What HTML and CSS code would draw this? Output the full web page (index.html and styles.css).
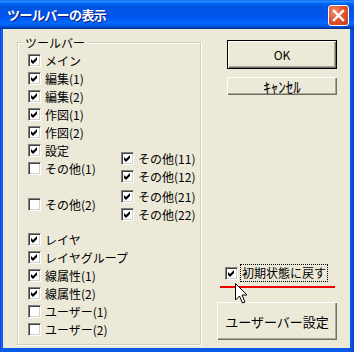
FILE: index.html
```html
<!DOCTYPE html>
<html lang="ja">
<head>
<meta charset="utf-8">
<title>ツールバーの表示</title>
<link rel="stylesheet" href="styles.css">
</head>
<body>
<div class="window">
  <div class="titlebar">
    <span class="title">ツールバーの表示</span>
    <span class="close"><svg width="13" height="13" viewBox="0 0 13 13"><path d="M2 2 L11 11 M11 2 L2 11" stroke="#fff" stroke-width="2.4" stroke-linecap="square"/></svg></span>
  </div>
  <div class="client">
    <fieldset class="group">
      <legend>ツールバー</legend>
      <div class="row"><span class="cb on"><svg viewBox="0 0 11 11"><path d="M2 4 L4 6 L8 2 L8 5 L4 9 L2 7 Z"/></svg></span>メイン</div>
      <div class="row"><span class="cb on"><svg viewBox="0 0 11 11"><path d="M2 4 L4 6 L8 2 L8 5 L4 9 L2 7 Z"/></svg></span>編集(1)</div>
      <div class="row"><span class="cb on"><svg viewBox="0 0 11 11"><path d="M2 4 L4 6 L8 2 L8 5 L4 9 L2 7 Z"/></svg></span>編集(2)</div>
      <div class="row"><span class="cb on"><svg viewBox="0 0 11 11"><path d="M2 4 L4 6 L8 2 L8 5 L4 9 L2 7 Z"/></svg></span>作図(1)</div>
      <div class="row"><span class="cb on"><svg viewBox="0 0 11 11"><path d="M2 4 L4 6 L8 2 L8 5 L4 9 L2 7 Z"/></svg></span>作図(2)</div>
      <div class="split">
        <div class="col col-left">
          <div class="row"><span class="cb on"><svg viewBox="0 0 11 11"><path d="M2 4 L4 6 L8 2 L8 5 L4 9 L2 7 Z"/></svg></span>設定</div>
          <div class="row"><span class="cb"></span>その他(1)</div>
          <div class="row row-skip"><span class="cb"></span>その他(2)</div>
        </div>
        <div class="col col-right">
          <div class="row"><span class="cb on"><svg viewBox="0 0 11 11"><path d="M2 4 L4 6 L8 2 L8 5 L4 9 L2 7 Z"/></svg></span>その他(11)</div>
          <div class="row"><span class="cb on"><svg viewBox="0 0 11 11"><path d="M2 4 L4 6 L8 2 L8 5 L4 9 L2 7 Z"/></svg></span>その他(12)</div>
          <div class="row row-gap"><span class="cb on"><svg viewBox="0 0 11 11"><path d="M2 4 L4 6 L8 2 L8 5 L4 9 L2 7 Z"/></svg></span>その他(21)</div>
          <div class="row"><span class="cb on"><svg viewBox="0 0 11 11"><path d="M2 4 L4 6 L8 2 L8 5 L4 9 L2 7 Z"/></svg></span>その他(22)</div>
        </div>
      </div>
      <div class="row row-after"><span class="cb on"><svg viewBox="0 0 11 11"><path d="M2 4 L4 6 L8 2 L8 5 L4 9 L2 7 Z"/></svg></span>レイヤ</div>
      <div class="row"><span class="cb on"><svg viewBox="0 0 11 11"><path d="M2 4 L4 6 L8 2 L8 5 L4 9 L2 7 Z"/></svg></span>レイヤグループ</div>
      <div class="row"><span class="cb on"><svg viewBox="0 0 11 11"><path d="M2 4 L4 6 L8 2 L8 5 L4 9 L2 7 Z"/></svg></span>線属性(1)</div>
      <div class="row"><span class="cb on"><svg viewBox="0 0 11 11"><path d="M2 4 L4 6 L8 2 L8 5 L4 9 L2 7 Z"/></svg></span>線属性(2)</div>
      <div class="row"><span class="cb"></span>ユーザー(1)</div>
      <div class="row"><span class="cb"></span>ユーザー(2)</div>
    </fieldset>
    <div class="side">
      <button class="btn btn-ok">OK</button>
      <button class="btn btn-cancel">ｷｬﾝｾﾙ</button>
      <div class="row row-reset"><span class="cb on"><svg viewBox="0 0 11 11"><path d="M2 4 L4 6 L8 2 L8 5 L4 9 L2 7 Z"/></svg></span><span class="focus">初期状態に戻す</span></div>
      <div class="redline"></div>
      <button class="btn btn-user">ユーザーバー設定</button>
    </div>
    <svg class="cursor" width="13" height="21" viewBox="0 0 13 21"><path d="M0.5 0.5 L0.5 17 L4.5 13 L7.5 20 L10 19 L7 12 L12 12 Z" fill="#fff" stroke="#000" stroke-width="1"/></svg>
  </div>
</div>
</body>
</html>
```
FILE: styles.css
```css
body {
  margin: 0;
}
.window {
  width: 354px;
  height: 352px;
  display: flex;
  flex-direction: column;
  background: linear-gradient(to right, #0831d9 0, #1665f0 1px, #0a5ae8 3px, #0a5ae8 350px, #0840d0 354px);
  font-family: "Noto Sans CJK JP", sans-serif;
  font-size: 12px;
  color: #000;
}
.titlebar {
  height: 29px;
  flex: none;
  display: flex;
  align-items: center;
  padding: 0 5px 0 7px;
  background: linear-gradient(to bottom, #0058ee 0%, #3593ff 4%, #288eff 6%, #127dff 8%, #036ffc 10%, #0262ee 14%, #0057e5 20%, #0054e3 24%, #0055eb 56%, #005bf5 66%, #026afe 76%, #0062ef 86%, #0052d6 92%, #0040ab 96%, #003092 100%);
}
.title {
  flex: 1;
  color: #fff;
  font-weight: bold;
  font-size: 13px;
  letter-spacing: -0.6px;
  line-height: 16px;
  text-shadow: 1px 1px 0 #0a1883;
}
.close {
  width: 21px;
  height: 21px;
  box-sizing: border-box;
  border: 1px solid #fff;
  border-radius: 3px;
  display: flex;
  align-items: center;
  justify-content: center;
  background: radial-gradient(circle at 30% 30%, #f0916f 0, #e2542e 45%, #c8401a 100%);
  margin-top: 2px;
}
.client {
  flex: 1;
  display: flex;
  align-items: stretch;
  background: #ece9d8;
  margin: 0 4px 4px 3px;
  position: relative;
}
.group {
  box-sizing: border-box;
  width: 184px;
  margin: 7px 0 3px 14px;
  padding: 2px 0 0 10px;
  border: 1px solid #d0d0bf;
  box-shadow: inset 1px 1px 0 #fff, 1px 1px 0 #fff;
  min-width: 0;
}
.group legend {
  padding: 0 2px;
  margin-left: -5px;
  line-height: 13px;
  background: #ece9d8;
}
.row {
  display: flex;
  align-items: center;
  gap: 4px;
  height: 18px;
  line-height: 13px;
  white-space: nowrap;
}
.cb {
  width: 13px;
  height: 13px;
  flex: none;
  box-sizing: border-box;
  background: #fff;
  border-top: 1px solid #808080;
  border-left: 1px solid #808080;
  border-bottom: 1px solid #fff;
  border-right: 1px solid #fff;
  box-shadow: inset 1px 1px 0 #404040, inset -1px -1px 0 #d4d0c8;
  display: flex;
}
.cb svg {
  width: 11px;
  height: 11px;
  fill: #000;
}
.split {
  display: flex;
}
.col-left {
  width: 93px;
}
.col-right {
  padding-top: 8px;
}
.row-skip {
  margin-top: 18px;
}
.row-gap {
  margin-top: 2px;
}
.row-after {
  margin-top: 7px;
}
.side {
  width: 110px;
  margin-left: 26px;
  padding-top: 11px;
  display: flex;
  flex-direction: column;
}
.btn {
  font-family: "Noto Sans CJK JP", sans-serif;
  font-size: 12px;
  color: #000;
  background: #ece9d8;
  border: none;
  padding: 0;
  box-shadow: inset 1px 1px 0 #fff, inset -1px -1px 0 #716f64, inset -2px -2px 0 #aca899;
}
.btn-ok {
  height: 29px;
  box-shadow: inset 0 0 0 1px #000, inset 2px 2px 0 #fff, inset -2px -2px 0 #716f64, inset -3px -3px 0 #aca899;
}
.btn-cancel {
  height: 18px;
  margin-top: 8px;
  font-size: 15px;
  line-height: 15px;
}
.row-reset {
  margin-top: auto;
  margin-left: -2px;
  gap: 2px;
}
.focus {
  border: 1px dotted #000;
  padding: 1px 1px;
  line-height: 14px;
}
.redline {
  height: 2px;
  background: #f00000;
  margin: 4px 0 0 -7px;
  width: 115px;
}
.btn-user {
  height: 38px;
  width: 120px;
  margin: 14px 0 8px -10px;
  font-size: 13px;
}
.cursor {
  position: absolute;
  left: 232px;
  top: 254px;
}
```
